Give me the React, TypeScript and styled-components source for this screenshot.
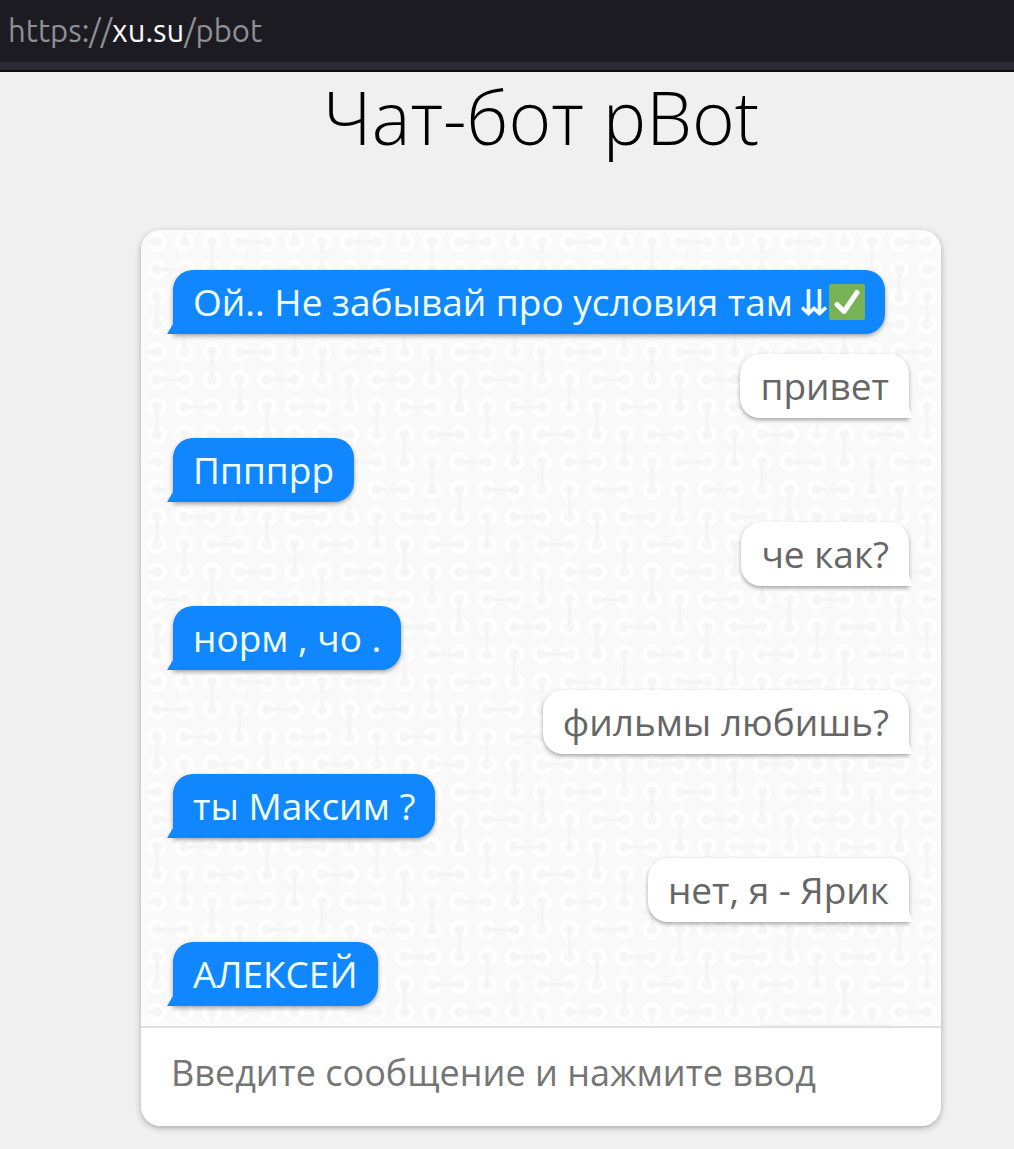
import React from "react";
import styled, { createGlobalStyle, css } from "styled-components";

const GlobalStyle = createGlobalStyle`
  * { box-sizing: border-box; }
  body {
    margin: 0;
    background: #f0f0f0;
    font-family: "Open Sans", "Noto Sans", sans-serif;
  }
`;

const AddressBar = styled.header`
  height: 72px;
  padding: 0 8px;
  background: #1c1b22;
  border-bottom: 2px solid #0c0c0d;
  box-shadow: inset 0 -8px 0 #2b2a33;
  color: #8f8f95;
  font-family: Ubuntu, "Noto Sans", sans-serif;
  font-size: 31px;
  line-height: 62px;
`;

const Host = styled.span`
  color: #fbfbfe;
`;

const Page = styled.main`
  display: flex;
  flex-direction: column;
  align-items: center;
  padding: 0 0 23px 68px;
`;

const Title = styled.h1`
  margin: 0 0 68px;
  color: #000;
  font-size: 73px;
  font-weight: 300;
  line-height: 90px;
`;

const Panel = styled.section`
  width: 100%;
  max-width: 800px;
  overflow: hidden;
  border-radius: 20px;
  background: #fff;
  box-shadow: 0 2px 6px rgba(0, 0, 0, 0.3);
`;

const Messages = styled.div`
  position: relative;
  overflow: hidden;
  background: #f9f9f9;
`;

const Backdrop = styled.svg`
  position: absolute;
  inset: 0;
  width: 100%;
  height: 100%;
`;

const List = styled.ol`
  position: relative;
  display: flex;
  flex-direction: column;
  gap: 20px;
  margin: 0;
  padding: 40px 32px 0;
  list-style: none;
  box-shadow: inset 0 0 8px 2px #fff;
`;

const Bubble = styled.li<{ $own?: boolean }>`
  position: relative;
  display: flex;
  align-items: center;
  min-height: 64px;
  padding: 0 20px;
  font-size: 37px;
  line-height: 64px;
  box-shadow: 0 2px 4px rgba(0, 0, 0, 0.35);

  &::after {
    content: "";
    position: absolute;
    bottom: 0;
    width: 6px;
    height: 10px;
  }

  ${({ $own }) =>
    $own
      ? css`
          align-self: flex-end;
          background: #fff;
          color: #666;
          border-radius: 20px 20px 0 20px;
          &::after {
            right: -4px;
            background: #fff;
            clip-path: polygon(0 0, 34% 0, 100% 100%, 0 100%);
          }
        `
      : css`
          align-self: flex-start;
          background: #1187ff;
          color: #f0ffff;
          border-radius: 20px 20px 20px 0;
          &::after {
            left: -6px;
            background: #1187ff;
            clip-path: polygon(100% 0, 100% 100%, 0 100%);
          }
        `}
`;

const NextBubble = styled(Bubble)`
  width: 168px;
  margin-bottom: -64px;
`;

const Icon = styled.svg<{ $width: number }>`
  flex: none;
  width: ${({ $width }) => $width}px;
  height: 36px;
`;

const Arrows = styled(Icon)`
  margin: 0 2px 0 8px;
`;

const Composer = styled.form`
  border-top: 2px solid #e0e0e0;
`;

const Field = styled.input`
  display: block;
  width: 100%;
  height: 98px;
  padding: 0 30px 10px;
  border: 0;
  outline: 0;
  background: #fff;
  color: #444;
  font: inherit;
  font-size: 36px;
  &::placeholder {
    color: #757575;
    opacity: 1;
  }
`;

/* Rings sit on a 4 × 4 grid; each link joins two neighbouring rings. */
const STEP = 27.5;
const slots = [-1, 0, 1, 2, 3, 4];
const mod4 = (n: number) => ((n % 4) + 4) % 4;

function LinkPattern() {
  const rings: React.ReactNode[] = [];
  const links: React.ReactNode[] = [];
  slots.forEach((row) =>
    slots.forEach((col) => {
      const x = 16 + col * STEP;
      const y = 12 + row * STEP;
      const key = `${row}:${col}`;
      rings.push(<circle key={key} cx={x} cy={y} r="7.5" />);
      if (mod4(col - row) === 3) {
        links.push(<path key={key} d={`M${x} ${y}h${STEP}`} />);
      }
      if (mod4(col - row) === 2) {
        links.push(<path key={key} d={`M${x} ${y}v${STEP}`} />);
      }
    })
  );
  return (
    <Backdrop aria-hidden="true">
      <defs>
        <pattern id="links" width="110" height="110" patternUnits="userSpaceOnUse">
          <g fill="#f6f6f6" stroke="#fefefe" strokeWidth="5">{rings}</g>
          <g stroke="#f9f9f9" strokeWidth="6">{links}</g>
          <g stroke="#f5f5f5" strokeWidth="3">{links}</g>
        </pattern>
      </defs>
      <rect width="100%" height="100%" fill="url(#links)" />
    </Backdrop>
  );
}

const messages: { text: string; own?: boolean; marks?: boolean }[] = [
  { text: "Ой.. Не забывай про условия там", marks: true },
  { text: "привет", own: true },
  { text: "Ппппрр" },
  { text: "че как?", own: true },
  { text: "норм , чо ." },
  { text: "фильмы любишь?", own: true },
  { text: "ты Максим ?" },
  { text: "нет, я - Ярик", own: true },
  { text: "АЛЕКСЕЙ" },
];

function Marks() {
  return (
    <>
      <Arrows $width={26} viewBox="0 0 26 36" fill="none" stroke="#f0ffff" strokeWidth="3.6" aria-label="⇊" role="img">
        <path d="M7.500 5v24M18.500 5v24M1 23.500l6.500 6 5.500-5 5.500 5 6.500-6" />
      </Arrows>
      <Icon $width={36} viewBox="0 0 36 36" aria-label="✅" role="img">
        <rect width="36" height="36" rx="2.5" fill="#77b255" />
        <path d="M8 20.500l7 7L28 8.500" fill="none" stroke="#fff" strokeWidth="5" strokeLinecap="round" strokeLinejoin="round" />
      </Icon>
    </>
  );
}

export default function App() {
  return (
    <>
      <GlobalStyle />
      <AddressBar>
        https://<Host>xu.su</Host>/pbot
      </AddressBar>
      <Page>
        <Title>Чат-бот pBot</Title>
        <Panel>
          <Messages>
            <LinkPattern />
            <List>
              {messages.map(({ text, own, marks }) => (
                <Bubble key={text} $own={own}>
                  {text}
                  {marks && <Marks />}
                </Bubble>
              ))}
              <NextBubble $own aria-hidden="true" />
            </List>
          </Messages>
          <Composer onSubmit={(event) => event.preventDefault()}>
            <Field
              type="text"
              aria-label="Введите сообщение и нажмите ввод"
              placeholder="Введите сообщение и нажмите ввод"
            />
          </Composer>
        </Panel>
      </Page>
    </>
  );
}
